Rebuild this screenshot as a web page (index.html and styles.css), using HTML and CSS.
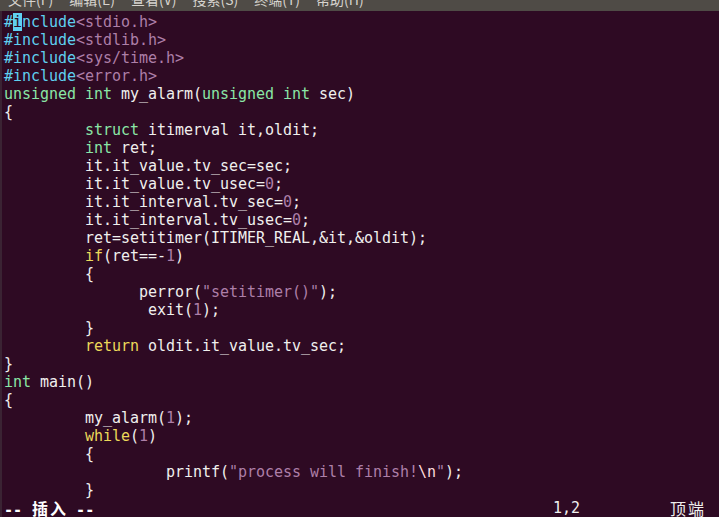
FILE: index.html
```html
<!DOCTYPE html>
<html lang="zh">
<head>
<meta charset="utf-8">
<title>vim</title>
<link rel="stylesheet" href="styles.css">
</head>
<body>
<div class="menubar"><div class="menu-inner"><span>文件(F)</span><span>编辑(E)</span><span>查看(V)</span><span>搜索(S)</span><span>终端(T)</span><span>帮助(H)</span></div></div>
<div class="term">
<pre class="code"><span class="pp">#</span><span class="cursor">i</span><span class="pp">nclude</span><span class="c">&lt;stdio.h&gt;</span>
<span class="pp">#include</span><span class="c">&lt;stdlib.h&gt;</span>
<span class="pp">#include</span><span class="c">&lt;sys/time.h&gt;</span>
<span class="pp">#include</span><span class="c">&lt;error.h&gt;</span>
<span class="t">unsigned</span> <span class="t">int</span> my_alarm(<span class="t">unsigned</span> <span class="t">int</span> sec)
{
         <span class="t">struct</span> itimerval it,oldit;
         <span class="t">int</span> ret;
         it.it_value.tv_sec=sec;
         it.it_value.tv_usec=<span class="c">0</span>;
         it.it_interval.tv_sec=<span class="c">0</span>;
         it.it_interval.tv_usec=<span class="c">0</span>;
         ret=setitimer(ITIMER_REAL,&amp;it,&amp;oldit);
         <span class="k">if</span>(ret==-<span class="c">1</span>)
         {
               perror(<span class="c">"setitimer()"</span>);
                exit(<span class="c">1</span>);
         }
         <span class="k">return</span> oldit.it_value.tv_sec;
}
<span class="t">int</span> main()
{
         my_alarm(<span class="c">1</span>);
         <span class="k">while</span>(<span class="c">1</span>)
         {
                  printf(<span class="c">"process will finish!</span><span class="sp">\n</span><span class="c">"</span>);
         }</pre>
<div class="status"><span class="mode">-- <span class="wide">插</span><span class="wide">入</span> --</span><span class="ruler">1,2</span><span class="pos">顶端</span></div>
</div>
</body>
</html>
```
FILE: styles.css
```css
html, body {
  margin: 0;
  padding: 0;
  background: #2e0a23;
  width: 719px;
  height: 517px;
  overflow: hidden;
}
.menubar {
  height: 11px;
  background: #4f4b46;
  overflow: hidden;
}
.menu-inner {
  display: flex;
  gap: 16px;
  padding-left: 8px;
  margin-top: -10px;
  font-family: "Noto Sans CJK SC", "Noto Sans", sans-serif;
  font-size: 14px;
  line-height: 18px;
  color: #d6d3ce;
  white-space: nowrap;
}
.term {
  padding-top: 2px;
  padding-left: 2px;
  border-left: 2px solid #3a2333;
  font-family: "DejaVu Sans Mono", "Noto Sans CJK SC", monospace;
  font-size: 15px;
  line-height: 18px;
  color: #f0f0ee;
}
.code {
  margin: 0;
  font: inherit;
  letter-spacing: -0.03px;
  white-space: pre;
}
.pp { color: #5fd0f0; }
.t { color: #8ae6a6; }
.k { color: #ecd95a; }
.c { color: #ad7fa8; }
.sp { color: #ffdcdc; }
.cursor {
  background: #5fd0f0;
  color: #2e0a23;
}
.status {
  display: grid;
  grid-template-columns: 549px 117px auto;
  height: 18px;
  white-space: pre;
}
.mode {
  font-weight: bold;
  color: #ffffff;
}
.wide {
  display: inline-block;
  width: 18px;
  text-align: center;
  font-family: "Noto Sans CJK SC", sans-serif;
  font-size: 16px;
}
.ruler { color: #f0f0ee; }
.pos {
  font-family: "Noto Sans CJK SC", sans-serif;
  font-size: 16px;
  letter-spacing: 2px;
  color: #f0f0ee;
}
```
